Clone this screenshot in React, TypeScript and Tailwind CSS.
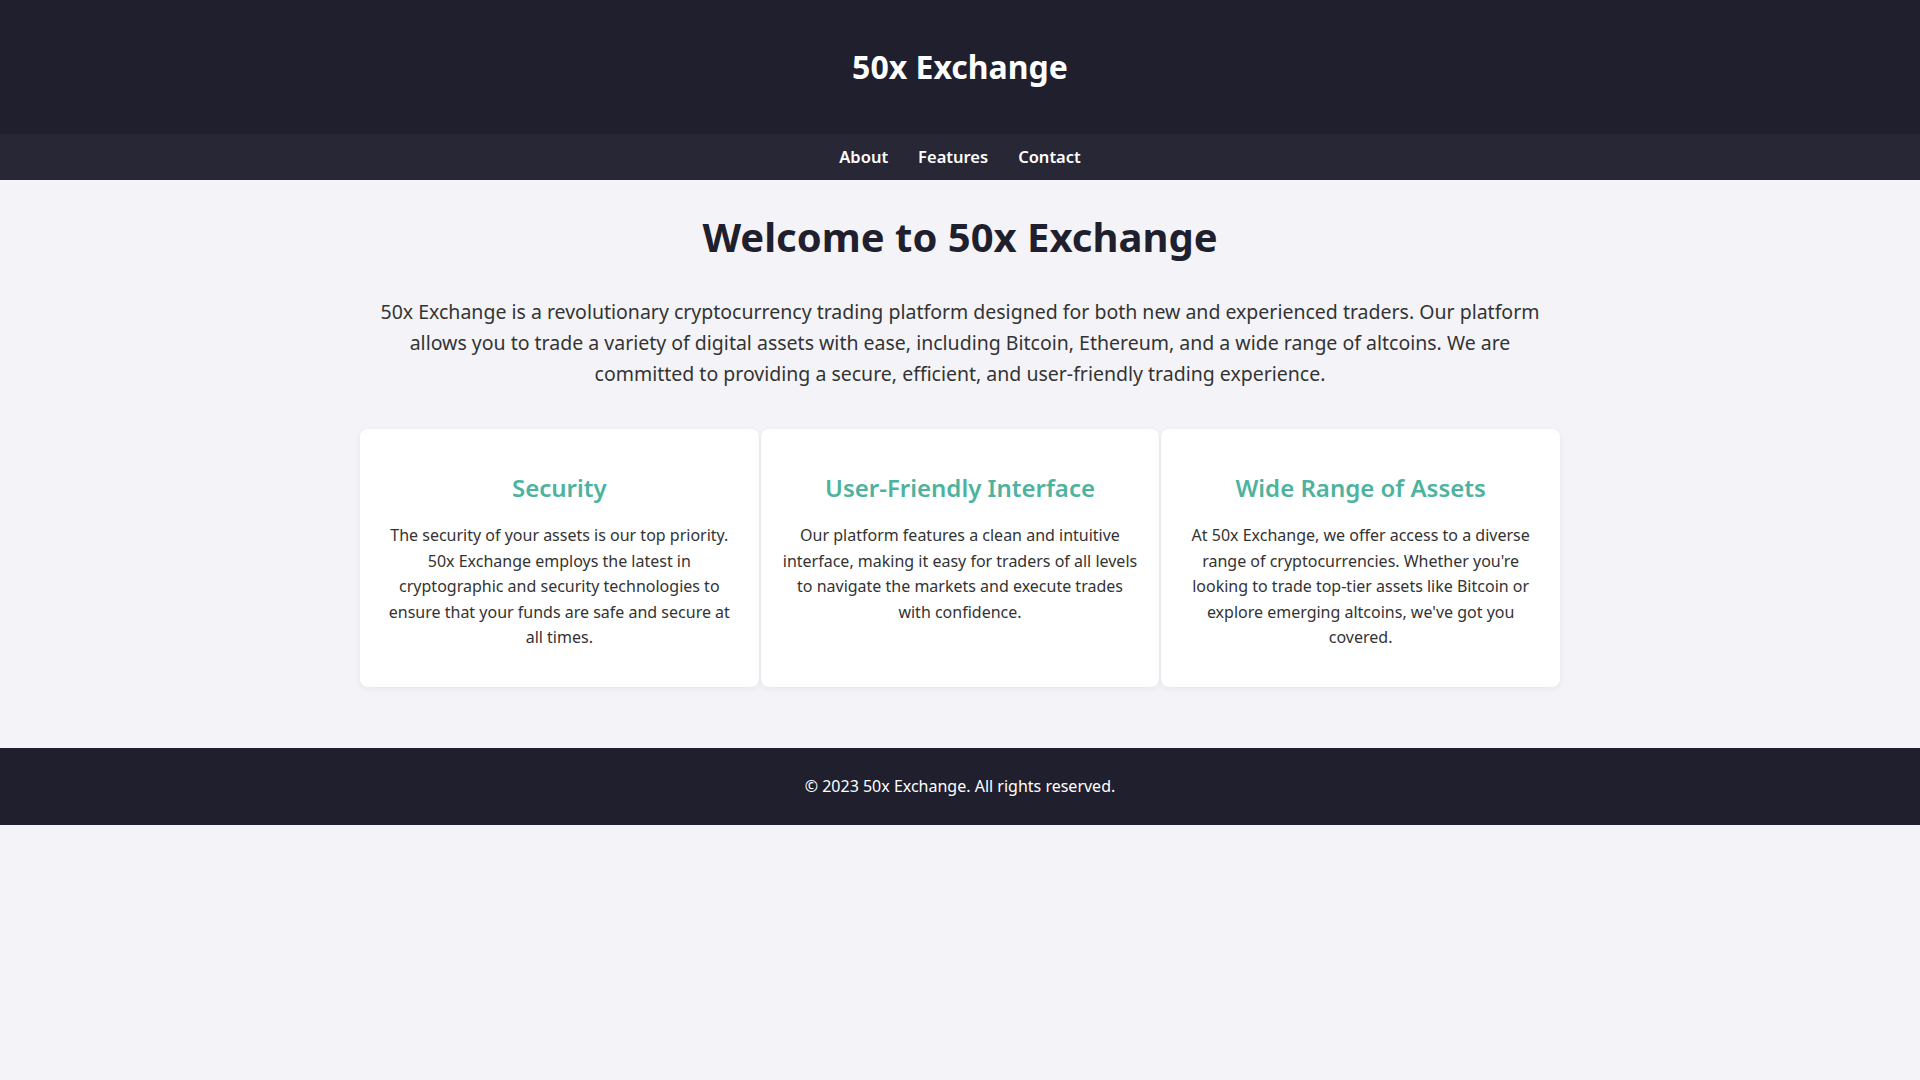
const features = [
  {
    title: 'Security',
    text: 'The security of your assets is our top priority. 50x Exchange employs the latest in cryptographic and security technologies to ensure that your funds are safe and secure at all times.',
  },
  {
    title: 'User-Friendly Interface',
    text: 'Our platform features a clean and intuitive interface, making it easy for traders of all levels to navigate the markets and execute trades with confidence.',
  },
  {
    title: 'Wide Range of Assets',
    text: "At 50x Exchange, we offer access to a diverse range of cryptocurrencies. Whether you're looking to trade top-tier assets like Bitcoin or explore emerging altcoins, we've got you covered.",
  },
];

export default function App() {
  return (
    <div className="min-h-screen bg-[#f4f4f8] font-['Noto_Sans',sans-serif] leading-[1.6] text-[#333]">
      {/* Header */}
      <header className="h-[134px] flex items-center justify-center bg-[#1f1f2e]">
        <h1 className="text-[32px] font-bold text-white">50x Exchange</h1>
      </header>

      {/* Nav */}
      <nav className="h-[46px] flex items-center justify-center gap-[30px] bg-[#272736]">
        {['About', 'Features', 'Contact'].map((item) => (
          <a key={item} href="#" className="text-[16.5px] font-semibold text-white">
            {item}
          </a>
        ))}
      </nav>

      {/* Main */}
      <main className="w-[1200px] mx-auto pt-[25px] pb-[61px] text-center">
        <h2 className="text-[40px] leading-[64px] font-bold text-[#1f1f2e]">Welcome to 50x Exchange</h2>
        <p className="mt-[27px] px-[20px] text-[19.5px] leading-[31.2px]">
          50x Exchange is a revolutionary cryptocurrency trading platform designed for both new and experienced traders. Our platform allows you to trade a variety of digital assets with ease, including Bitcoin, Ethereum, and a wide range of altcoins. We are committed to providing a secure, efficient, and user-friendly trading experience.
        </p>

        <div className="mt-[39px] grid grid-cols-3 gap-[2px]">
          {features.map((f) => (
            <div
              key={f.title}
              className="bg-white rounded-[8px] shadow-[0_2px_6px_rgba(0,0,0,0.06)] px-[20px] pt-[40px] pb-[36px]"
            >
              <h3 className="text-[24px] leading-[38.4px] font-semibold text-[#4db39e]">{f.title}</h3>
              <p className="mt-[16px] text-[16px] leading-[25.6px]">{f.text}</p>
            </div>
          ))}
        </div>
      </main>

      {/* Footer */}
      <footer className="h-[77px] flex items-center justify-center bg-[#1f1f2e]">
        <p className="text-[16px] text-white">© 2023 50x Exchange. All rights reserved.</p>
      </footer>
    </div>
  );
}
